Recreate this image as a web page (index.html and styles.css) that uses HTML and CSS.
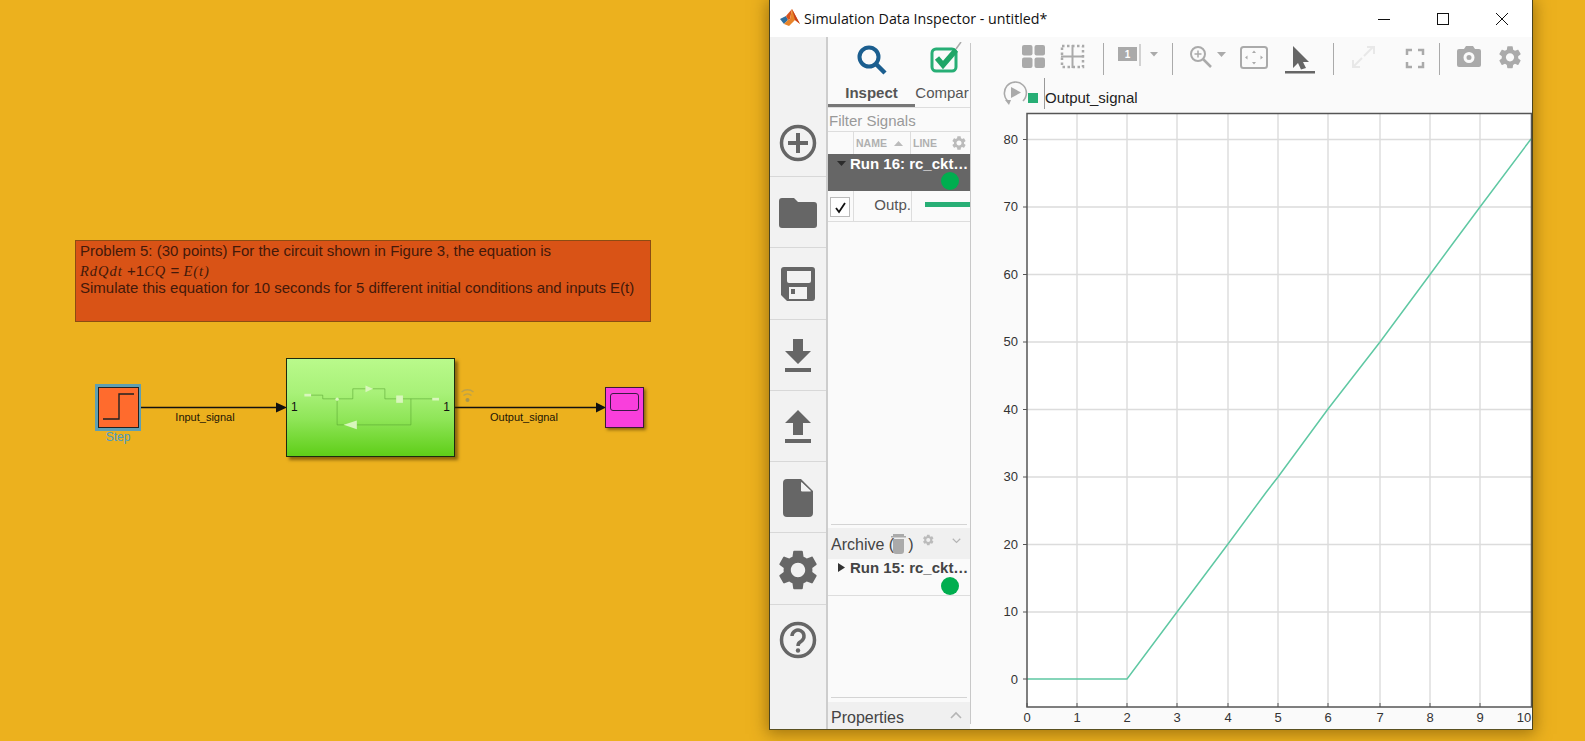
FILE: index.html
```html
<!DOCTYPE html>
<html lang="en">
<head>
<meta charset="utf-8">
<title>Simulation Data Inspector</title>
<link rel="stylesheet" href="styles.css">
</head>
<body>
<svg class="defs" width="0" height="0"><defs><path id="gear" fill-rule="evenodd" d="M19.14 12.94c.04-.3.06-.61.06-.94 0-.32-.02-.64-.07-.94l2.03-1.58c.18-.14.23-.41.12-.61l-1.92-3.32c-.12-.22-.37-.29-.59-.22l-2.39.96c-.5-.38-1.03-.7-1.62-.94l-.36-2.54c-.04-.24-.24-.41-.48-.41h-3.84c-.24 0-.43.17-.47.41l-.36 2.54c-.59.24-1.13.57-1.62.94l-2.39-.96c-.22-.08-.47 0-.59.22L2.74 8.87c-.12.21-.08.47.12.61l2.03 1.58c-.05.3-.09.63-.09.94s.02.64.07.94l-2.03 1.58c-.18.14-.23.41-.12.61l1.92 3.32c.12.22.37.29.59.22l2.39-.96c.5.38 1.03.7 1.62.94l.36 2.54c.05.24.24.41.48.41h3.84c.24 0 .44-.17.47-.41l.36-2.54c.59-.24 1.13-.56 1.62-.94l2.39.96c.22.08.47 0 .59-.22l1.92-3.32c.12-.22.07-.47-.12-.61l-2.01-1.58zM12 15.6c-1.98 0-3.6-1.62-3.6-3.6s1.62-3.6 3.6-3.6 3.6 1.62 3.6 3.6-1.62 3.6-3.6 3.6z"/></defs></svg>

<div class="note">
  <div class="note-line">Problem 5: (30 points) For the circuit shown in Figure 3, the equation is</div>
  <div class="note-line note-eq"><i>RdQdt</i> +1<i>CQ</i> = <i>E(t)</i></div>
  <div class="note-line">Simulate this equation for 10 seconds for 5 different initial conditions and inputs E(t)</div>
</div>

<svg class="wires" width="770" height="741" viewBox="0 0 770 741">
  <path d="M138 407.5H277M455 407.5H597" stroke="#111" stroke-width="1.3" fill="none"/>
  <path d="M276 402.5L287 407.5L276 412.5ZM596 402.5L606 407.5L596 412.5Z" fill="#111"/>
  <g fill="none" stroke="#bda24a" stroke-width="1.4">
    <path d="M461.500 392a9 9 0 0 1 12 0"/>
    <path d="M463.500 395.500a6 6 0 0 1 8 0"/>
  </g>
  <circle cx="467.500" cy="400" r="2" fill="#a8954f"/>
</svg>

<div class="step">
  <svg width="39" height="39" viewBox="0 0 39 39"><path d="M4 31H20V6H35" fill="none" stroke="#222" stroke-width="1.4"/></svg>
</div>
<div class="step-label">Step</div>
<div class="wire-label wire-in">Input_signal</div>
<div class="wire-label wire-out">Output_signal</div>

<div class="subsystem">
  <span class="port">1</span>
  <span class="port">1</span>
  <svg class="sub-art" width="167" height="97" viewBox="20 26 500 290">
    <g fill="none" stroke="#55a030" stroke-width="1.6">
      <path d="M92 134H127V145H217V115H255M277 115H313V145H347M367 145H455M170 145V223H190M229 223H391V145"/>
    </g>
    <g fill="#d9f6bd">
      <rect x="72" y="130" width="20" height="8"/>
      <rect x="455" y="142" width="20" height="8"/>
      <rect x="347" y="135" width="20" height="22"/>
      <circle cx="170" cy="146" r="5"/>
      <path d="M255 105L277 115L255 125Z"/>
      <path d="M229 210V236L190 223Z"/>
    </g>
  </svg>
</div>

<div class="scope"><div class="scope-screen"></div></div>

<div class="window">
  <header class="titlebar">
    <svg class="logo" width="22" height="20" viewBox="0 0 22 20">
      <path d="M1 11L7 8L9 12L5 16Z" fill="#2f6f9f"/>
      <path d="M7 8L13 1L11 11L9 12Z" fill="#d9541e"/>
      <path d="M13 1L21 16L16 12L10 18L5 16L9 12L11 11Z" fill="#e8842a"/>
      <path d="M13 1L21 16L16 12Z" fill="#c8401a"/>
    </svg>
    <span class="title">Simulation Data Inspector - untitled*</span>
    <div class="winbtns">
      <svg width="14" height="14" viewBox="0 0 14 14"><path d="M1 7.500H13" stroke="#111" stroke-width="1"/></svg>
      <svg width="14" height="14" viewBox="0 0 14 14"><rect x="1.500" y="1.500" width="11" height="11" fill="none" stroke="#111" stroke-width="1"/></svg>
      <svg width="14" height="14" viewBox="0 0 14 14"><path d="M1 1L13 13M13 1L1 13" stroke="#111" stroke-width="1"/></svg>
    </div>
  </header>
  <div class="winbody">
    <nav class="rail">
      <div class="rail-item rail-first">
        <svg width="38" height="38" viewBox="0 0 38 38"><circle cx="19" cy="19" r="16.500" fill="none" stroke="#666" stroke-width="3.500"/><path d="M19 9V29M9 19H29" stroke="#666" stroke-width="4"/></svg>
      </div>
      <div class="rail-item">
        <svg width="38" height="32" viewBox="0 0 38 32"><path d="M3 1H15L19 5H35A3 3 0 0 1 38 8V28A3 3 0 0 1 35 31H3A3 3 0 0 1 0 28V4A3 3 0 0 1 3 1Z" fill="#666"/></svg>
      </div>
      <div class="rail-item">
        <svg width="36" height="36" viewBox="0 0 36 36"><path fill-rule="evenodd" d="M4 1H32A3 3 0 0 1 35 4V32A3 3 0 0 1 32 35H7L1 29V4A3 3 0 0 1 4 1ZM7 5V15A2 2 0 0 0 9 17H29A2 2 0 0 0 31 15V5ZM9 21V33H27V21ZM11 23H15V28H11Z" fill="#666"/></svg>
      </div>
      <div class="rail-item">
        <svg width="28" height="34" viewBox="0 0 28 34"><path d="M9 0H19V12H27L14 25L1 12H9ZM1 29H27V33H1Z" fill="#666"/></svg>
      </div>
      <div class="rail-item">
        <svg width="28" height="34" viewBox="0 0 28 34"><path d="M14 0L27 13H19V25H9V13H1ZM1 29H27V33H1Z" fill="#666"/></svg>
      </div>
      <div class="rail-item">
        <svg width="30" height="38" viewBox="0 0 30 38"><path fill-rule="evenodd" d="M4 0H18L30 12V34A4 4 0 0 1 26 38H4A4 4 0 0 1 0 34V4A4 4 0 0 1 4 0ZM18 3V12H28Z" fill="#666"/><path d="M18.500 3L28 12.500H18.500Z" fill="#f2f2f2"/></svg>
      </div>
      <div class="rail-item">
        <svg width="40" height="40" viewBox="2 2 20 20"><use href="#gear" fill="#666"/></svg>
      </div>
      <div class="rail-item">
        <svg width="38" height="38" viewBox="0 0 38 38"><circle cx="19" cy="19" r="16.500" fill="none" stroke="#666" stroke-width="3.500"/><path d="M13 15A6 6 0 1 1 22.500 20C20 21.500 19 22 19 25" fill="none" stroke="#666" stroke-width="3.500"/><circle cx="19" cy="29.500" r="2.200" fill="#666"/></svg>
      </div>
    </nav>

    <aside class="panel">
      <div class="tabs">
        <div class="tab tab-on">
          <svg width="30" height="30" viewBox="0 0 30 30"><circle cx="12" cy="12" r="9.500" fill="none" stroke="#1b5e8f" stroke-width="4"/><path d="M19 19L28 28" stroke="#1b5e8f" stroke-width="4.500"/></svg>
          <span class="tab-text">Inspect</span>
        </div>
        <div class="tab">
          <svg class="tab-compare" width="32" height="32" viewBox="0 0 32 32"><rect x="2" y="7" width="24" height="22" rx="4" fill="none" stroke="#27ae75" stroke-width="3"/><path d="M7 16L13 23L26 8" fill="none" stroke="#1fa566" stroke-width="5.500"/><path d="M26 7L31 0" stroke="#aaa" stroke-width="1.500"/></svg>
          <span class="tab-text">Compar</span>
        </div>
      </div>
      <div class="filter">Filter Signals</div>
      <div class="cols">
        <span class="col-check"></span>
        <span class="col-name">NAME <svg width="9" height="5" viewBox="0 0 9 5"><path d="M0 5L4.500 0L9 5Z" fill="#bbb"/></svg></span>
        <span class="col-line">LINE <svg width="14" height="14" viewBox="2.500 2 19 20"><use href="#gear" fill="#bbb"/></svg></span>
      </div>
      <div class="run run-active">
        <div class="run-title"><svg width="9" height="5" viewBox="0 0 9 5"><path d="M0 0H9L4.500 5Z" fill="#2b2b2b"/></svg><span>Run 16: rc_ckt…</span></div>
        <div class="dot"></div>
      </div>
      <div class="signal">
        <div class="sig-check"><span class="box"><svg width="13" height="13" viewBox="0 0 13 13"><path d="M2 7L5 11L11 2" fill="none" stroke="#111" stroke-width="1.800"/></svg></span></div>
        <div class="sig-name">Outp.</div>
        <div class="sig-line"><span class="swatch"></span></div>
      </div>
      <div class="gap-a"></div>
      <div class="rule"></div>
      <div class="sect">
        <span class="sect-name">Archive (<span class="trash-wrap"><svg class="trash" width="15" height="20" viewBox="0 0 15 20"><path d="M2 0H13V2H15V3.500H0V2H2ZM2 5H13V17A3 3 0 0 1 10 20H5A3 3 0 0 1 2 17Z" fill="#aaa"/></svg></span>)</span>
        <svg class="sect-gear" width="14" height="14" viewBox="2.500 2 19 20"><use href="#gear" fill="#bbb"/></svg>
        <svg width="12" height="8" viewBox="0 0 12 8"><path d="M1 1L6 6L11 1" fill="none" stroke="#b5b5b5" stroke-width="1.600"/></svg>
      </div>
      <div class="run run-archive">
        <div class="run-title"><svg width="7" height="9" viewBox="0 0 7 9"><path d="M0 0V9L7 4.500Z" fill="#333"/></svg><span>Run 15: rc_ckt…</span></div>
        <div class="dot"></div>
      </div>
      <div class="gap-b"></div>
      <div class="rule"></div>
      <div class="sect sect-props">
        <span class="sect-name">Properties</span>
        <svg width="12" height="8" viewBox="0 0 12 8"><path d="M1 7L6 2L11 7" fill="none" stroke="#b5b5b5" stroke-width="1.600"/></svg>
      </div>
    </aside>

    <main class="main">
      <div class="toolbar">
        <svg width="23" height="32" viewBox="0 0 23 32"><g fill="#aaa"><rect x="0" y="2" width="10.500" height="10.500" rx="2"/><rect x="12.500" y="2" width="10.500" height="10.500" rx="2"/><rect x="0" y="14.500" width="10.500" height="10.500" rx="2"/><rect x="12.500" y="14.500" width="10.500" height="10.500" rx="2"/></g></svg>
        <svg width="23" height="32" viewBox="0 0 23 32"><rect x="1" y="3" width="21" height="21" fill="none" stroke="#aaa" stroke-width="2.500" stroke-dasharray="2.500 2.500"/><path d="M11.500 2V25M0 13.500H23" stroke="#aaa" stroke-width="2"/></svg>
        <span class="sep"></span>
        <svg width="42" height="32" viewBox="0 0 42 32"><rect x="0" y="4" width="19" height="14" fill="#aaa"/><text class="box-num" x="9.500" y="15" text-anchor="middle">1</text><path d="M22 1V23" stroke="#aaa"/><path d="M32 9H40L36 13.500Z" fill="#aaa"/></svg>
        <span class="sep"></span>
        <svg width="37" height="32" viewBox="0 0 37 32"><circle cx="8" cy="11" r="7" fill="none" stroke="#aaa" stroke-width="2"/><path d="M8 7.500V14.500M4.500 11H11.500" stroke="#aaa" stroke-width="1.500"/><path d="M13 16L21 24" stroke="#aaa" stroke-width="2.500"/><path d="M27 9H36L31.500 14Z" fill="#aaa"/></svg>
        <svg width="28" height="32" viewBox="0 0 28 32"><rect x="1" y="4" width="26" height="21" rx="2.500" fill="none" stroke="#aaa" stroke-width="2"/><path d="M14 7.500L12 10H16ZM14 21.500L12 19H16ZM5 14.500L7.500 12.500V16.500ZM23 14.500L20.500 12.500V16.500Z" fill="#aaa"/></svg>
        <svg width="30" height="32" viewBox="0 0 30 32"><path d="M8 3L24 19H18L21 25L16 26.500L13 20L8 25Z" fill="#666"/><rect x="0" y="28" width="30" height="2.500" fill="#666"/></svg>
        <span class="sep"></span>
        <svg width="24" height="32" viewBox="0 0 24 32"><path d="M13 13L22 4M2 24L11 15M16 4H23V11M2 17V24H9" fill="none" stroke="#e8e8e8" stroke-width="2"/></svg>
        <svg width="18" height="32" viewBox="0 0 18 32"><path d="M1 12V7H6M12 7H17V12M17 19V24H12M6 24H1V19" fill="none" stroke="#aaa" stroke-width="2.500"/></svg>
        <span class="sep"></span>
        <svg width="24" height="32" viewBox="0 0 24 32"><path fill-rule="evenodd" d="M2 6H7L9 3H16L18 6H22A2 2 0 0 1 24 8V22A2 2 0 0 1 22 24H2A2 2 0 0 1 0 22V8A2 2 0 0 1 2 6ZM12 9A5.500 5.500 0 1 0 12 20A5.500 5.500 0 1 0 12 9ZM12 12A2.500 2.500 0 1 1 12 17A2.500 2.500 0 1 1 12 12Z" fill="#aaa"/></svg>
        <svg width="24" height="32" viewBox="1.500 -0.500 21 28"><use href="#gear" fill="#aaa"/></svg>
      </div>
      <div class="legend">
        <svg class="replay" width="26" height="26" viewBox="0 0 26 26"><path d="M7 22A11 11 0 1 1 21 21" fill="none" stroke="#aaa" stroke-width="1.600"/><path d="M9 7L19 12.500L9 18Z" fill="#aaa"/><path d="M3 20L9 20L7 25Z" fill="#aaa"/></svg>
        <span class="legend-swatch"></span>
        <span class="legend-text">Output_signal</span>
      </div>
      <svg class="plot" width="561" height="618" viewBox="971 112 561 618">
        <rect x="1027" y="113" width="504" height="594" fill="#fff"/>
        <g stroke="#e0e0e0" stroke-width="1.600" fill="none">
          <path d="M1077 113V707M1127 113V707M1177 113V707M1228 113V707M1278 113V707M1328 113V707M1380 113V707M1430 113V707M1480 113V707"/>
        </g>
        <g stroke="#dcdcdc" stroke-width="1.400" fill="none">
          <path d="M1027 139.500H1531M1027 207H1531M1027 274.500H1531M1027 342H1531M1027 409.500H1531M1027 477H1531M1027 544.500H1531M1027 612H1531"/>
        </g>
        <path d="M1027 679H1127L1177 612L1228 544L1266 492.500L1278 477L1328 409L1380 342L1430 274.500L1451 246L1480 207L1531 139" fill="none" stroke="#5fc8a3" stroke-width="1.500"/>
        <path d="M1027 113.500H1531.500V707H1027Z" fill="none" stroke="#555" stroke-width="1.500"/>
        <path d="M1023 139.500H1027M1023 207H1027M1023 274.500H1027M1023 342H1027M1023 409.500H1027M1023 477H1027M1023 544.500H1027M1023 612H1027M1023 679H1027" stroke="#555"/>
        <path d="M1027 703V707M1077 703V707M1127 703V707M1177 703V707M1228 703V707M1278 703V707M1328 703V707M1380 703V707M1430 703V707M1480 703V707" stroke="#555"/>
        <g class="tick tick-y">
          <text x="1018" y="144">80</text><text x="1018" y="211">70</text><text x="1018" y="279">60</text><text x="1018" y="346">50</text><text x="1018" y="414">40</text><text x="1018" y="481">30</text><text x="1018" y="549">20</text><text x="1018" y="616">10</text><text x="1018" y="684">0</text>
        </g>
        <g class="tick tick-x">
          <text x="1027" y="722">0</text><text x="1077" y="722">1</text><text x="1127" y="722">2</text><text x="1177" y="722">3</text><text x="1228" y="722">4</text><text x="1278" y="722">5</text><text x="1328" y="722">6</text><text x="1380" y="722">7</text><text x="1430" y="722">8</text><text x="1480" y="722">9</text><text x="1524" y="722">10</text>
        </g>
      </svg>
    </main>
  </div>
</div>
</body>
</html>
```
FILE: styles.css
```css
* { box-sizing: border-box; }
html, body { margin: 0; height: 741px; }
body {
  position: relative;
  width: 1585px;
  overflow: hidden;
  background: #ecb11e;
  font-family: "Liberation Sans", Arial, sans-serif;
  color: #222;
}
.defs { position: absolute; }

/* Model canvas */
.note {
  position: absolute;
  left: 75px;
  top: 240px;
  width: 576px;
  height: 82px;
  padding: 1px 4px;
  background: #d95316;
  border: 1px solid #8c4c12;
  color: #43190a;
  font-size: 15px;
  line-height: 17px;
}
.note-eq { height: 20px; padding-top: 3px; }
.note-eq i { font-family: "Liberation Serif", serif; font-size: 14.500px; letter-spacing: 1px; }
.wires { position: absolute; left: 0; top: 0; }
.step {
  position: absolute;
  left: 95px;
  top: 384px;
  width: 46px;
  height: 47px;
  padding: 4px 3.5px;
  background: #5f9fb2;
}
.step svg {
  display: block;
  background: #ff6b2d;
  outline: 1px solid #222;
}
.step-label {
  position: absolute;
  left: 95px;
  top: 430px;
  width: 46px;
  text-align: center;
  font-size: 12px;
  color: #4b9cc0;
}
.wire-label {
  position: absolute;
  top: 411px;
  width: 110px;
  text-align: center;
  font-size: 11px;
  color: #1d1606;
}
.wire-in { left: 150px; }
.wire-out { left: 469px; }
.subsystem {
  position: absolute;
  left: 286px;
  top: 358px;
  width: 169px;
  height: 99px;
  display: flex;
  justify-content: space-between;
  align-items: center;
  padding: 0 4px;
  background: linear-gradient(#b9fa8b 0%, #a8f178 35%, #8fe558 62%, #5fce18 100%);
  border: 1px solid #1c2a10;
  box-shadow: 3px 3px 3px rgba(60, 40, 0, .55);
  font-size: 12px;
  color: #111;
}
.port { position: relative; top: -1px; }
.sub-art { position: absolute; left: 0; top: 0; }
.scope {
  position: absolute;
  left: 605px;
  top: 387px;
  width: 39px;
  height: 41px;
  padding: 5px 4px;
  background: #f93fdc;
  border: 1px solid #3d1838;
  box-shadow: 2px 2px 3px rgba(60, 40, 0, .55);
}
.scope-screen {
  height: 18px;
  border: 1.5px solid #3a1a45;
  border-radius: 3px;
}

/* Inspector window */
.window {
  position: absolute;
  left: 769px;
  top: 0;
  width: 764px;
  height: 730px;
  display: flex;
  flex-direction: column;
  background: #fafafa;
  border-left: 1px solid #4a4420;
  border-right: 1px solid #4a4420;
  border-bottom: 1px solid #5a5020;
  box-shadow: 0 2px 15px 2px rgba(90, 60, 0, .5);
}
.titlebar {
  flex: none;
  height: 37px;
  display: flex;
  align-items: center;
  padding-left: 9px;
  background: #fff;
}
.logo { flex: none; margin-top: -2px; }
.title {
  margin-left: 3px;
  font-family: "Open Sans", sans-serif;
  font-size: 14.250px;
  color: #111;
  white-space: nowrap;
}
.winbtns {
  margin-left: auto;
  margin-right: 23px;
  display: flex;
  gap: 45px;
}
.winbody { flex: 1; display: flex; min-height: 0; }

.rail {
  flex: none;
  width: 58px;
  display: flex;
  flex-direction: column;
  background: #f2f2f2;
  border-right: 2px solid #cdcdcd;
}
.rail-item {
  flex: none;
  height: 71.300px;
  display: flex;
  align-items: center;
  justify-content: center;
  border-bottom: 1px solid #d8d8d8;
  padding: 2px 0 0 0;
}
.rail-first { height: 140px; padding-top: 72px; }
.rail-item:last-child { border-bottom: 0; padding-top: 0; }

.panel {
  position: relative;
  flex: none;
  width: 143px;
  display: flex;
  flex-direction: column;
  background: #fafafa;
  padding-right: 1px;
  overflow: hidden;
}
.panel::after {
  content: "";
  position: absolute;
  right: 0;
  top: 6px;
  bottom: 5px;
  width: 1.500px;
  background: #c8c8c8;
}
.tabs {
  flex: none;
  height: 71px;
  display: flex;
  border-bottom: 1px solid #ddd;
}
.tab {
  flex: none;
  width: 87px;
  height: 70px;
  display: flex;
  flex-direction: column;
  align-items: center;
  gap: 9px;
  padding-top: 8px;
}
.tab + .tab { width: 54px; padding-top: 5px; gap: 10px; overflow: hidden; }
.tab-compare { flex: none; margin-left: 8px; }
.tab-on { border-bottom: 3.500px solid #777; }
.tab-text {
  font-size: 15px;
  line-height: 17px;
  color: #555;
  white-space: nowrap;
}
.tab-on .tab-text { font-weight: bold; }
.filter {
  flex: none;
  height: 24px;
  padding-left: 1px;
  font-size: 15px;
  line-height: 25px;
  color: #999;
  border-bottom: 1px solid #ddd;
}
.cols {
  flex: none;
  height: 22px;
  display: flex;
  font-size: 10.500px;
  font-weight: bold;
  line-height: 21px;
  color: #b0b0b0;
}
.col-check { width: 26px; border-right: 1px solid #ddd; }
.col-name {
  width: 57px;
  padding-left: 2px;
  border-right: 1px solid #ddd;
  display: flex;
  align-items: center;
  gap: 7px;
}
.col-line {
  flex: 1;
  padding-left: 2px;
  display: flex;
  align-items: center;
  gap: 15px;
}
.run {
  flex: none;
  height: 37px;
  position: relative;
  font-size: 15px;
  font-weight: bold;
  color: #444;
}
.run-title {
  display: flex;
  align-items: center;
  gap: 4px;
  height: 18px;
  padding-left: 9px;
  white-space: nowrap;
}
.run-active { background: #666; color: #fff; }
.run-archive { border-bottom: 1px solid #ddd; }
.run-archive .run-title { gap: 5px; padding-left: 10px; }
.dot {
  position: absolute;
  right: 11px;
  top: 18px;
  width: 18px;
  height: 18px;
  border-radius: 50%;
  background: #00ae4f;
}
.signal {
  flex: none;
  height: 31px;
  display: flex;
  border-bottom: 1px solid #ddd;
}
.sig-check {
  width: 26px;
  padding: 6px 0 0 2px;
  border-right: 1px solid #ddd;
}
.box {
  display: flex;
  align-items: center;
  justify-content: center;
  width: 20px;
  height: 20px;
  background: #fff;
  border: 1px solid #bbb;
}
.sig-name {
  width: 58px;
  text-align: right;
  font-size: 15px;
  line-height: 27px;
  color: #555;
  border-right: 1px solid #ddd;
}
.sig-line { flex: 1; padding: 11px 0 0 13px; }
.swatch { display: block; height: 5px; background: #27ae75; }
.gap-a { flex: 303 0 0; }
.gap-b { flex: 102 0 0; }
.rule { flex: none; height: 1px; margin: 0 3px; background: #d4d4d4; }
.sect {
  flex: none;
  height: 31px;
  margin-top: 3px;
  display: flex;
  align-items: center;
  padding: 0 9px 0 3px;
  background: #f0f0f0;
}
.sect-name {
  padding-top: 3px;
  font-size: 16px;
  color: #444;
  white-space: nowrap;
}
.trash-wrap { position: relative; display: inline-block; width: 14px; height: 10px; }
.trash { position: absolute; left: -3px; top: -2px; }
.sect-gear { margin-left: 10px; margin-right: 18px; margin-top: -6px; }
.sect svg:last-child { margin-top: -4px; }
.sect-props { height: 27px; margin-top: 4px; justify-content: space-between; }
.sect-props .sect-name { padding-top: 4px; }
.sect-props svg:last-child { margin-top: -2px; margin-right: -1px; }

.main {
  flex: 1;
  min-width: 0;
  display: flex;
  flex-direction: column;
  background: #fafafa;
}
.toolbar {
  flex: none;
  height: 41px;
  padding: 6px 0 0 51px;
  display: grid;
  grid-template-columns: 39px 42px 15px 54px 18px 50px 45px 48px 18px 55px 33px 18px 41px 22px;
  align-items: start;
}
.toolbar svg { display: block; overflow: visible; }
.sep { display: block; width: 1px; height: 32px; background: #aaa; }
.box-num { font: bold 10px "Liberation Sans", sans-serif; fill: #fff; }
.legend {
  flex: none;
  height: 34px;
  display: flex;
  align-items: flex-start;
  padding-left: 31px;
}
.replay { flex: none; margin-top: 2px; }
.legend-swatch {
  flex: none;
  width: 10px;
  height: 10px;
  margin: 15px 0 0 0;
  background: #27ae75;
}
.legend-text {
  margin-left: 6px;
  padding: 11px 0 0 0;
  height: 31px;
  border-left: 1px solid #999;
  font-size: 15px;
  line-height: 18px;
  color: #222;
}
.plot { flex: none; display: block; }
.tick { font-family: "Liberation Sans", sans-serif; font-size: 13px; fill: #333; }
.tick-y { text-anchor: end; }
.tick-x { text-anchor: middle; }
```
